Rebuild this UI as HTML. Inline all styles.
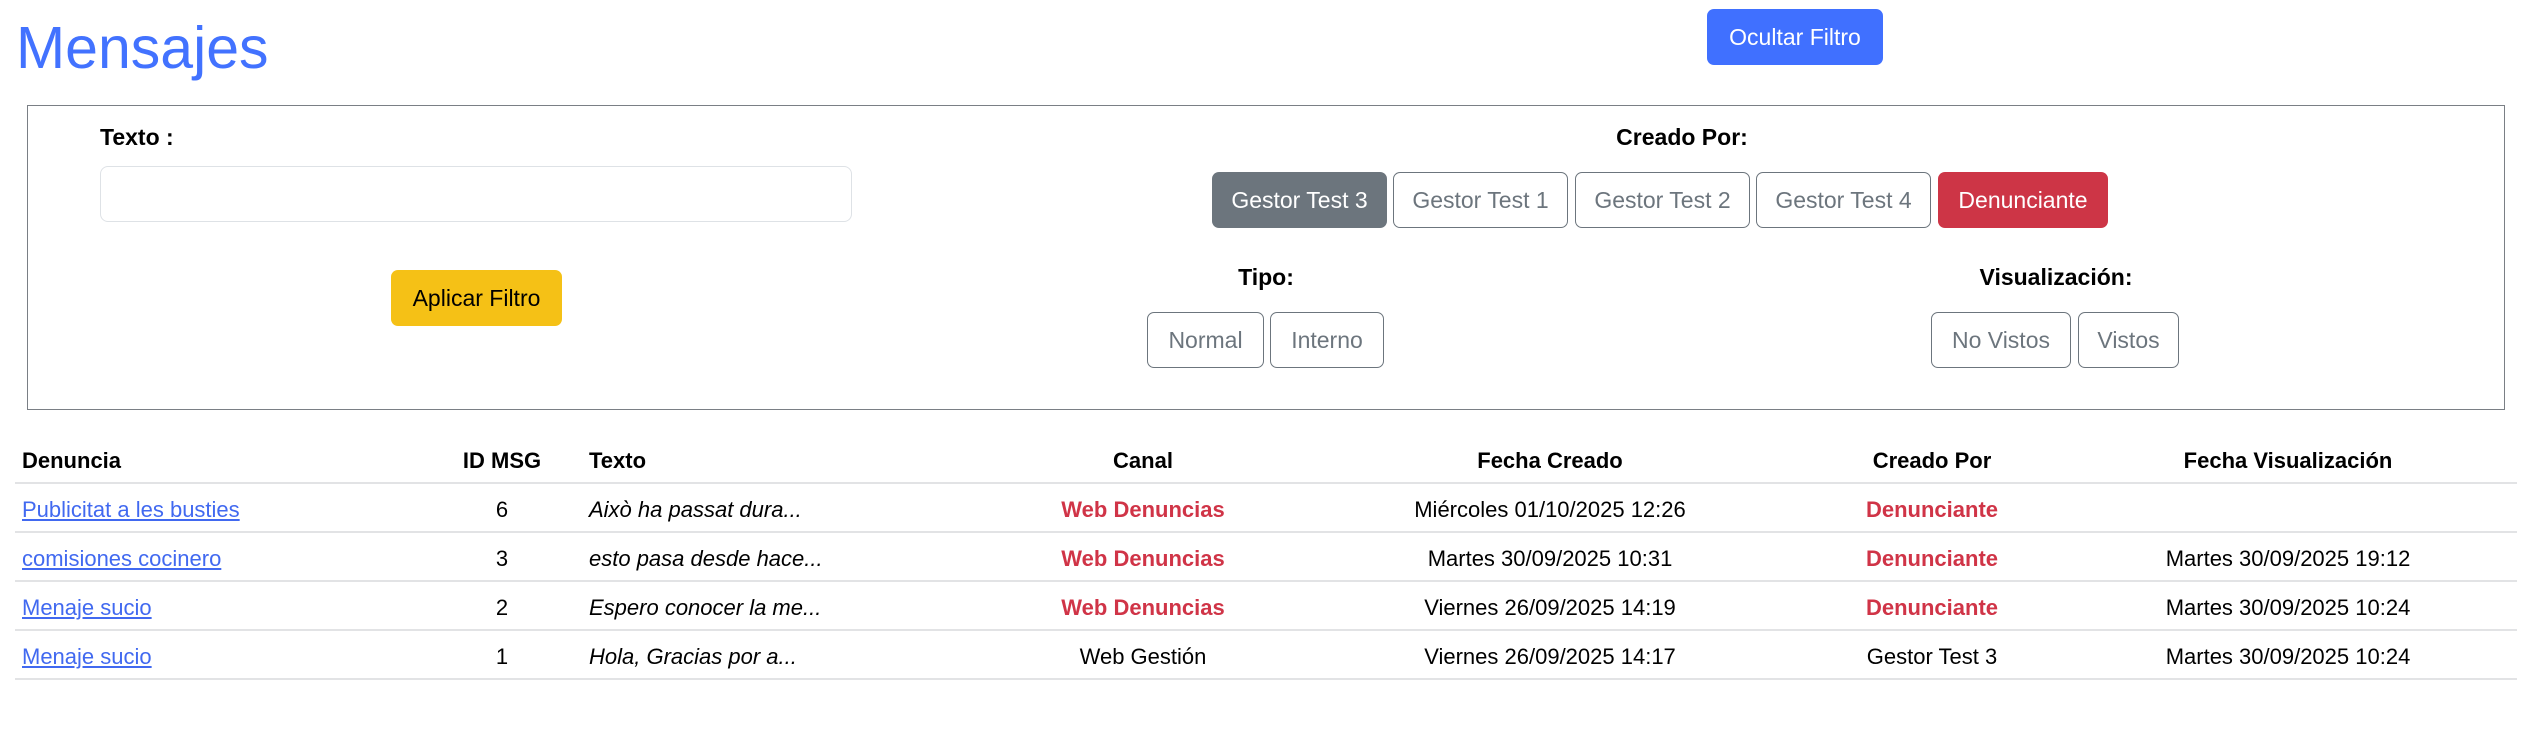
<!DOCTYPE html>
<html><head><meta charset="utf-8"><style>
*{box-sizing:border-box;margin:0;padding:0}
body{width:2530px;height:735px;background:#fff;font-family:"Liberation Sans",sans-serif;color:#000;position:relative;overflow:hidden}
.a{position:absolute;white-space:nowrap}
.btn{position:absolute;border-radius:7px;display:flex;align-items:center;justify-content:center;font-size:23px;white-space:nowrap}
.ol{border:1.5px solid #6c757d;color:#6c757d;background:#fff}
.lbl{position:absolute;font-weight:bold;font-size:23px;transform:translateX(-50%);white-space:nowrap}
.line{position:absolute;left:15px;width:2502px;height:2px;background:#e2e3e5}
.c{position:absolute;transform:translate(-50%,-50%);white-space:nowrap;font-size:22px}
.l{position:absolute;transform:translateY(-50%);white-space:nowrap;font-size:22px}
.h{font-weight:bold}
.red{color:#d03447;font-weight:bold}
a{color:#4169f0;text-decoration:underline}
i{font-style:italic}
</style></head><body>
<div class="a" style="left:16px;top:8px;font-size:59px;color:#4272ff;line-height:80px">Mensajes</div>
<div class="btn" style="left:1707px;top:9px;width:176px;height:56px;background:#4070ff;color:#fff">Ocultar Filtro</div>

<div class="a" style="left:27px;top:105px;width:2478px;height:305px;border:1.5px solid #7a7f85"></div>
<div class="a" style="left:100px;top:124px;font-weight:bold;font-size:23px">Texto :</div>
<div class="a" style="left:100px;top:166px;width:752px;height:56px;border:1.5px solid #dee2e6;border-radius:8px"></div>
<div class="btn" style="left:391px;top:270px;width:171px;height:56px;background:#f5c116;color:#000">Aplicar Filtro</div>

<div class="lbl" style="left:1682px;top:124px">Creado Por:</div>
<div class="btn" style="left:1212px;top:172px;width:175px;height:56px;background:#6c757d;color:#fff">Gestor Test 3</div>
<div class="btn ol" style="left:1393px;top:172px;width:175px;height:56px">Gestor Test 1</div>
<div class="btn ol" style="left:1575px;top:172px;width:175px;height:56px">Gestor Test 2</div>
<div class="btn ol" style="left:1756px;top:172px;width:175px;height:56px">Gestor Test 4</div>
<div class="btn" style="left:1938px;top:172px;width:170px;height:56px;background:#cd3546;color:#fff">Denunciante</div>

<div class="lbl" style="left:1266px;top:264px">Tipo:</div>
<div class="btn ol" style="left:1147px;top:312px;width:117px;height:56px">Normal</div>
<div class="btn ol" style="left:1270px;top:312px;width:114px;height:56px">Interno</div>

<div class="lbl" style="left:2056px;top:264px">Visualización:</div>
<div class="btn ol" style="left:1931px;top:312px;width:140px;height:56px">No Vistos</div>
<div class="btn ol" style="left:2078px;top:312px;width:101px;height:56px">Vistos</div>

<div class="l h" style="left:22px;top:461px">Denuncia</div>
<div class="c h" style="left:502px;top:461px">ID MSG</div>
<div class="l h" style="left:589px;top:461px">Texto</div>
<div class="c h" style="left:1143px;top:461px">Canal</div>
<div class="c h" style="left:1550px;top:461px">Fecha Creado</div>
<div class="c h" style="left:1932px;top:461px">Creado Por</div>
<div class="c h" style="left:2288px;top:461px">Fecha Visualización</div>
<div class="line" style="top:482px"></div>

<div class="l" style="left:22px;top:510px"><a>Publicitat a les busties</a></div>
<div class="c" style="left:502px;top:510px">6</div>
<div class="l" style="left:589px;top:510px"><i>Això ha passat dura...</i></div>
<div class="c red" style="left:1143px;top:510px">Web Denuncias</div>
<div class="c" style="left:1550px;top:510px">Miércoles 01/10/2025 12:26</div>
<div class="c red" style="left:1932px;top:510px">Denunciante</div>
<div class="line" style="top:531px"></div>

<div class="l" style="left:22px;top:559px"><a>comisiones cocinero</a></div>
<div class="c" style="left:502px;top:559px">3</div>
<div class="l" style="left:589px;top:559px"><i>esto pasa desde hace...</i></div>
<div class="c red" style="left:1143px;top:559px">Web Denuncias</div>
<div class="c" style="left:1550px;top:559px">Martes 30/09/2025 10:31</div>
<div class="c red" style="left:1932px;top:559px">Denunciante</div>
<div class="c" style="left:2288px;top:559px">Martes 30/09/2025 19:12</div>
<div class="line" style="top:580px"></div>

<div class="l" style="left:22px;top:608px"><a>Menaje sucio</a></div>
<div class="c" style="left:502px;top:608px">2</div>
<div class="l" style="left:589px;top:608px"><i>Espero conocer la me...</i></div>
<div class="c red" style="left:1143px;top:608px">Web Denuncias</div>
<div class="c" style="left:1550px;top:608px">Viernes 26/09/2025 14:19</div>
<div class="c red" style="left:1932px;top:608px">Denunciante</div>
<div class="c" style="left:2288px;top:608px">Martes 30/09/2025 10:24</div>
<div class="line" style="top:629px"></div>

<div class="l" style="left:22px;top:657px"><a>Menaje sucio</a></div>
<div class="c" style="left:502px;top:657px">1</div>
<div class="l" style="left:589px;top:657px"><i>Hola, Gracias por a...</i></div>
<div class="c" style="left:1143px;top:657px">Web Gestión</div>
<div class="c" style="left:1550px;top:657px">Viernes 26/09/2025 14:17</div>
<div class="c" style="left:1932px;top:657px">Gestor Test 3</div>
<div class="c" style="left:2288px;top:657px">Martes 30/09/2025 10:24</div>
<div class="line" style="top:678px"></div>
</body></html>
